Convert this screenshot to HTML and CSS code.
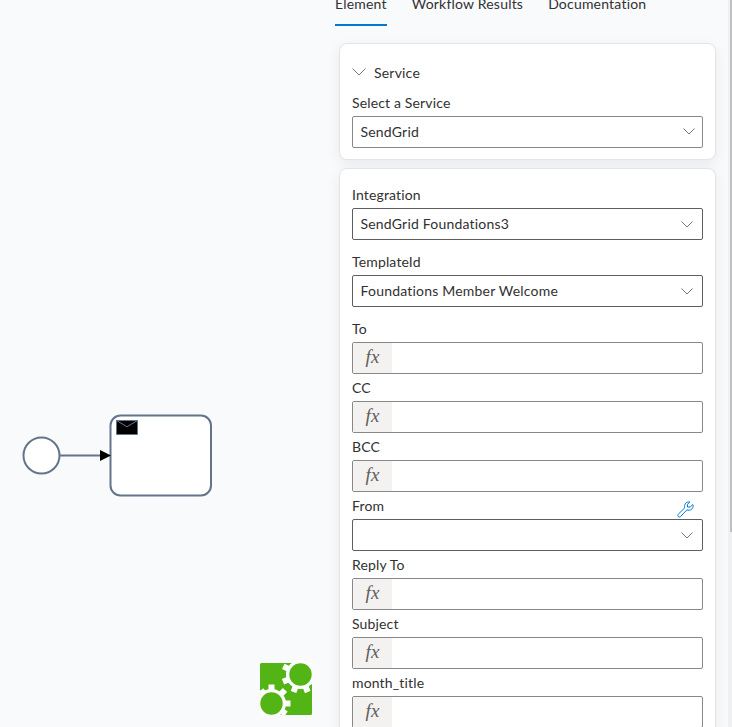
FILE: index.html
```html
<!DOCTYPE html>
<html lang="en">
<head>
<meta charset="utf-8">
<title>Workflow designer</title>
<link rel="stylesheet" href="styles.css">
</head>
<body>
<div class="app">
  <main class="canvas">
    <svg class="diagram" width="325" height="727" viewBox="0 0 325 727">
      <g fill="#fff" stroke="#64748b" stroke-width="2">
        <circle cx="41.5" cy="455.5" r="18"/>
        <path d="M60 455.5H102"/>
        <rect x="110.500" y="415.500" width="100.500" height="80" rx="10"/>
      </g>
      <path d="M100 450L111 455.500L100 461Z"/>
      <path d="M116.500 420.500H137.500V434.500H116.500Z" fill="#000" stroke="#64748b"/>
      <path d="M116.500 420.500L127 426.800L137.500 420.500" fill="none" stroke="#64748b"/>
      <g>
        <rect x="260" y="663" width="52" height="52" rx="1.5" fill="#52b415"/>
        <g fill="#fff">
          <circle cx="300.500" cy="674.500" r="14.500"/>
          <path d="M301 663H312.200V677H301ZM260 703H272V715.200H260Z"/>
          <circle cx="271.500" cy="703.500" r="14.500"/>
        </g>
        <g stroke="#fff" stroke-width="6">
          <path d="M300.500 674.500L283.300 666.400M300.500 674.500L283 681.700M300.500 674.500L293.500 692M300.500 674.500L307.800 692M300.500 674.500L313 682"/>
          <path d="M271.500 703.500V684.500M271.500 703.500L285 690M271.500 703.500H290.500M271.500 703.500L286 714M271.500 703.500L261 690"/>
        </g>
        <path d="M258 715.200H314V720H258ZM312.200 660H318V718H312.200ZM255 680H260V718H255Z" fill="#f8fafc"/>
        <g fill="#52b415"><circle cx="300.500" cy="674.500" r="11.200"/><circle cx="271.500" cy="703.500" r="11.200"/></g>
      </g>
    </svg>
  </main>
  <aside class="panel">
    <nav class="tabs">
      <span class="tab active">Element</span>
      <span class="tab">Workflow Results</span>
      <span class="tab">Documentation</span>
    </nav>
    <section class="card service">
      <div class="heading"><svg width="14" height="8" viewBox="0 0 14 8"><path d="M.5 .5L7 7L13.500 .5"/></svg><span>Service</span></div>
      <label>Select a Service</label>
      <div class="box select light"><span>SendGrid</span><svg class="chev" width="12" height="7" viewBox="0 0 12 7"><path d="M.5 .5L6 6L11.500 .5"/></svg></div>
    </section>
    <section class="card fields">
      <label>Integration</label>
      <div class="box select gap"><span>SendGrid Foundations3</span><svg class="chev" width="12" height="7" viewBox="0 0 12 7"><path d="M.5 .5L6 6L11.500 .5"/></svg></div>
      <label>TemplateId</label>
      <div class="box select gap"><span>Foundations Member Welcome</span><svg class="chev" width="12" height="7" viewBox="0 0 12 7"><path d="M.5 .5L6 6L11.500 .5"/></svg></div>
      <label>To</label>
      <div class="box"><i class="fx">fx</i></div>
      <label>CC</label>
      <div class="box"><i class="fx">fx</i></div>
      <label>BCC</label>
      <div class="box"><i class="fx">fx</i></div>
      <label class="with-tool">From
        <svg width="17" height="17" viewBox="0 0 17 17"><path d="M12.800 1L10.500 3.300V6H13.300L15.900 3.500C16.700 6 15.300 8.900 12.300 9.200Q11 9.300 9.800 8.900L3.700 15.400C2.600 16.600 .9 16 .8 14.500Q.8 13.700 1.400 13.100L7.700 6.900C6.800 3.600 9.200 .2 12.800 1Z"/></svg>
      </label>
      <div class="box select"><span></span><svg class="chev" width="12" height="7" viewBox="0 0 12 7"><path d="M.5 .5L6 6L11.500 .5"/></svg></div>
      <label>Reply To</label>
      <div class="box"><i class="fx">fx</i></div>
      <label>Subject</label>
      <div class="box"><i class="fx">fx</i></div>
      <label>month_title</label>
      <div class="box"><i class="fx">fx</i></div>
    </section>
  </aside>
  <div class="scroll"><div class="thumb"></div></div>
</div>
</body>
</html>
```
FILE: styles.css
```css
* { box-sizing: border-box; }
body {
  margin: 0;
  background: #f8fafc;
  color: #323130;
  font: 14px Lato, sans-serif;
  letter-spacing: .2px;
}
.app { display: flex; width: 732px; height: 727px; overflow: hidden; }
.canvas { width: 325px; flex: none; }
.diagram { display: block; }
.panel { width: 403px; flex: none; padding: 0 12px 0 14px; }
.tabs { display: flex; gap: 25px; height: 26px; margin: 0 0 17px -4px; }
.tab { height: 26px; line-height: 8px; white-space: nowrap; }
.active { border-bottom: 2px solid #0078d4; }
.card {
  width: 377px;
  padding: 12px 12px 11px;
  background: #fff;
  border: 1px solid #e2e4e8;
  border-radius: 8px;
  box-shadow: 0 4px 14px rgba(0, 0, 0, .07);
}
.service { margin-bottom: 8px; height: 117px; }
.heading { display: flex; align-items: center; height: 33px; gap: 8px; }
.heading svg { margin-bottom: 2px; }
.card svg { fill: none; stroke: #797775; stroke-width: 1; }
label { display: block; height: 27px; line-height: 28px; letter-spacing: .15px; }
.box {
  display: flex;
  height: 32px;
  border: 1px solid #8a8886;
  border-radius: 2px;
}
.select { align-items: center; justify-content: space-between; padding: 0 9px 0 7.5px; border-color: #605e5c; }
.select span { margin-bottom: 2px; }
.light { border-color: #8a8886; padding-right: 7px; }
.light svg { margin-bottom: 1px; }
.gap { margin-bottom: 8px; }
.fx {
  width: 39px;
  background: #f3f2f1;
  color: #605e5c;
  font: italic 19px/27px "Liberation Serif", serif;
  text-align: center;
}
.with-tool { display: flex; justify-content: space-between; padding-right: 9px; }
.card .with-tool svg { stroke: #0078d4; margin-top: 9px; }
.scroll { width: 4px; flex: none; background: #f0f0f0; padding-left: 2px; }
.thumb { height: 532px; background: #c1c1c1; }
```
